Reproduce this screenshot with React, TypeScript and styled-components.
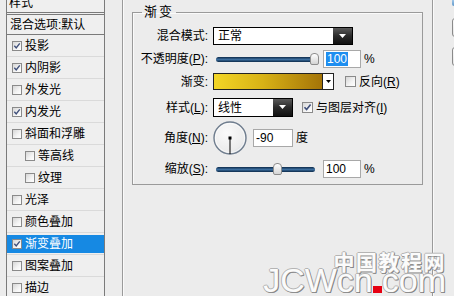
import React from "react";
import styled, { createGlobalStyle } from "styled-components";

const GlobalStyle = createGlobalStyle`
  html, body { margin: 0; padding: 0; }
  body {
    width: 454px; height: 296px; overflow: hidden; background: #ececec;
    font-family: "Liberation Sans", "Noto Sans CJK SC", sans-serif;
    font-size: 12px; color: #000;
  }
  #root { width: 454px; height: 296px; }
`;

const Page = styled.div`
  position: relative;
  display: flex;
  width: 454px;
  height: 296px;
  overflow: hidden;
  background: #ececec;
`;

/* ---------- left list ---------- */
const LeftPanel = styled.div`
  flex: none;
  width: 105px;
  padding-left: 6px;
  box-sizing: border-box;
  height: 100%;
`;

const StyleList = styled.div`
  height: 100%;
  border-left: 1px solid #7a7a7a;
  border-right: 1px solid #7a7a7a;
  background: #efefef;
  display: flex;
  flex-direction: column;
`;

const HeaderRow = styled.div`
  flex: none;
  height: 12px;
  box-sizing: border-box;
  padding: 0 0 3px 2px;
  display: flex;
  align-items: flex-end;
  overflow: hidden;
  line-height: 12px;
`;

const DoubleRule = styled.div`
  flex: none;
  height: 1px;
  border-top: 1px solid #7a7a7a;
  border-bottom: 1px solid #7a7a7a;
`;

const BlendRow = styled.div`
  flex: none;
  height: 19px;
  display: flex;
  align-items: center;
  padding-left: 3px;
  border-bottom: 1px solid #7a7a7a;
  line-height: 14px;
`;

const ListItem = styled.div`
  flex: none;
  height: 21px;
  display: flex;
  align-items: center;
  border-bottom: 1px solid #dadada;
`;

const ItemInner = styled.div<{ $indent: boolean; $selected: boolean }>`
  width: 100%;
  height: 18px;
  display: flex;
  align-items: center;
  box-sizing: border-box;
  padding-left: ${(p) => (p.$indent ? 18 : 5)}px;
  background: ${(p) => (p.$selected ? "#1689e3" : "transparent")};
  color: ${(p) => (p.$selected ? "#fff" : "#000")};
  line-height: 14px;
`;

const Box = styled.span<{ $size: number }>`
  flex: none;
  display: inline-flex;
  align-items: center;
  justify-content: center;
  width: ${(p) => p.$size}px;
  height: ${(p) => p.$size}px;
  box-sizing: border-box;
  border: 1px solid #8a8a8a;
  background: linear-gradient(135deg, #d6d6d6 0%, #f4f4f4 60%, #ffffff 100%);
  margin-right: 3px;
`;

const Check = ({ on, size }: { on: boolean; size: number }) => (
  <Box $size={size}>
    {on && (
      <svg width={size - 2} height={size - 2} viewBox="0 0 9 9">
        <path d="M1.5 4.3 L3.6 6.6 L7.6 1.6" fill="none" stroke="#3f4f7a" strokeWidth="1.6" />
      </svg>
    )}
  </Box>
);

/* ---------- right panel ---------- */
const OuterBox = styled.div`
  flex: none;
  margin-left: 17px;
  width: 311px;
  height: 100%;
  box-sizing: border-box;
  border-left: 1px solid #9a9a9a;
  border-right: 1px solid #9a9a9a;
  box-shadow: inset 1px 0 0 #fafafa, 1px 0 0 #fafafa;
  padding: 5px 9px 0;
`;

const Group = styled.fieldset`
  margin: 0;
  min-width: 0;
  padding: 0 0 6px;
  border: 1px solid #9a9a9a;
  box-shadow: inset 1px 1px 0 #fafafa;
  display: flex;
  flex-direction: column;
`;

const Legend = styled.legend`
  margin-left: 9px;
  padding: 0 2px;
  font-size: 13px;
  letter-spacing: 2px;
  line-height: 14px;
`;

const Row = styled.div<{ $h: number; $mt: number }>`
  display: flex;
  align-items: center;
  height: ${(p) => p.$h}px;
  margin-top: ${(p) => p.$mt}px;
  line-height: 14px;
`;

const Label = styled.span`
  flex: none;
  width: 75px;
  margin-right: 5px;
  text-align: right;
  white-space: nowrap;
`;

const Select = styled.div<{ $w: number }>`
  flex: none;
  width: ${(p) => p.$w}px;
  height: 100%;
  box-sizing: border-box;
  border: 1px solid #000;
  background: #fff;
  display: flex;
`;

const SelectText = styled.span`
  flex: 1;
  padding-left: 4px;
  display: flex;
  align-items: center;
`;

const SelectButton = styled.span`
  flex: none;
  width: 19px;
  background: linear-gradient(#5a5a5a 0%, #2a2a2a 50%, #111 100%);
  display: flex;
  align-items: center;
  justify-content: center;
`;

const SliderWrap = styled.div`
  flex: none;
  position: relative;
  width: 107px;
  height: 100%;
  display: flex;
  align-items: center;
`;

const Track = styled.div`
  margin-left: 3px;
  width: 99px;
  height: 5px;
  border-radius: 3px;
  background: linear-gradient(#0c2a4a 0%, #3c6e9e 50%, #0c2a4a 100%);
`;

const Thumb = styled.div`
  position: absolute;
  top: 3px;
  width: 9px;
  height: 12px;
  box-sizing: border-box;
  border: 1px solid #8d8d8d;
  border-radius: 4px 4px 2px 2px;
  background: linear-gradient(#ffffff, #d4d4d4);
`;

const Input = styled.div<{ $w: number; $ml: number }>`
  flex: none;
  width: ${(p) => p.$w}px;
  height: 18px;
  margin-left: ${(p) => p.$ml}px;
  box-sizing: border-box;
  border: 1px solid #a8a8a8;
  background: #fff;
  padding-left: 2px;
  display: flex;
  align-items: center;
`;

const Selected = styled.span`
  background: #1e8ef0;
  color: #fff;
  padding: 0 1px;
`;

const Unit = styled.span`
  margin-left: 3px;
`;

const GradientBox = styled.div`
  flex: none;
  width: 121px;
  height: 100%;
  box-sizing: border-box;
  border: 1px solid #222;
  display: flex;
`;

const GradientFill = styled.div`
  flex: 1;
  background: linear-gradient(to right, #f3d626 0%, #d8b216 45%, #a47408 100%);
`;

const SmallArrow = styled.span`
  flex: none;
  width: 10px;
  border-left: 1px solid #222;
  background: #fff;
  display: flex;
  align-items: center;
  justify-content: center;
`;

const CheckLabel = styled.span<{ $ml: number }>`
  display: inline-flex;
  align-items: center;
  margin-left: ${(p) => p.$ml}px;
  white-space: nowrap;
`;

const RightColumn = styled.div`
  flex: none;
  margin-left: 19px;
  display: flex;
  flex-direction: column;
`;

const TopSliver = styled.div`
  width: 60px;
  height: 6px;
  background: linear-gradient(#9fc6e8, #5f97c9);
  border-radius: 0 0 2px 2px;
`;

const SideButton = styled.div<{ $mt: number }>`
  width: 70px;
  height: 17px;
  margin-top: ${(p) => p.$mt}px;
  border: 1px solid #8a8a8a;
  border-radius: 3px;
  background: linear-gradient(#fbfbfb, #e4e4e4);
`;

/* ---------- watermark ---------- */
const Watermark = styled.div`
  position: absolute;
  right: 8px;
  top: 250px;
  display: flex;
  flex-direction: column;
  align-items: flex-end;
  color: #fbfbfb;
  text-shadow: -1px 0 #b4b4b4, 0 -1px #b4b4b4, 1px 0 #8e8e8e, 0 1px #8e8e8e, 1px 1px #7a7a7a;
  pointer-events: none;
`;

const WmCn = styled.div`
  font-family: "Noto Sans CJK SC", sans-serif;
  font-weight: 700;
  font-size: 21px;
  line-height: 22px;
  letter-spacing: 1.5px;
`;

const WmEn = styled.div`
  font-family: "Liberation Sans", Arial, sans-serif;
  font-size: 34px;
  line-height: 34px;
  margin-top: -9px;
  display: flex;
  align-items: baseline;
`;

const WmDot = styled.span`
  display: inline-block;
  width: 9px;
  height: 7px;
  background: #e60012;
  color: transparent;
  text-shadow: none;
  overflow: hidden;
  line-height: 7px;
  font-size: 7px;
`;

/* ---------- data ---------- */
const items: { name: string; on: boolean; indent?: boolean; selected?: boolean }[] = [
  { name: "投影", on: true },
  { name: "内阴影", on: true },
  { name: "外发光", on: false },
  { name: "内发光", on: true },
  { name: "斜面和浮雕", on: false },
  { name: "等高线", on: false, indent: true },
  { name: "纹理", on: false, indent: true },
  { name: "光泽", on: false },
  { name: "颜色叠加", on: false },
  { name: "渐变叠加", on: true, selected: true },
  { name: "图案叠加", on: false },
  { name: "描边", on: false },
];

const DownTri = ({ color, w }: { color: string; w: number }) => (
  <svg width={w} height={Math.ceil(w / 2) + 1} viewBox={`0 0 ${w} ${Math.ceil(w / 2) + 1}`}>
    <path d={`M0 0 H${w} L${w / 2} ${Math.ceil(w / 2)} Z`} fill={color} />
  </svg>
);

const Slider = ({ frac }: { frac: number }) => (
  <SliderWrap>
    <Track />
    <Thumb style={{ left: 3 + frac * 98 - 4.5 }} />
  </SliderWrap>
);

const Dial = () => (
  <svg width="34" height="34" viewBox="0 0 34 34" style={{ flex: "none" }}>
    <defs>
      <radialGradient id="dialg" cx="40%" cy="35%" r="70%">
        <stop offset="0%" stopColor="#fbfbfb" />
        <stop offset="80%" stopColor="#ececec" />
        <stop offset="100%" stopColor="#d6dbe2" />
      </radialGradient>
    </defs>
    <circle cx="17" cy="17" r="16" fill="url(#dialg)" stroke="#6f7d8e" strokeWidth="1.4" />
    <circle cx="17" cy="17" r="14.6" fill="none" stroke="#ffffff" strokeWidth="0.8" opacity="0.8" />
    <line x1="17" y1="17" x2="17" y2="33" stroke="#000" strokeWidth="1" />
    <rect x="15.5" y="15.5" width="3" height="3" fill="#000" />
  </svg>
);

export default function App() {
  return (
    <Page>
      <GlobalStyle />
      <LeftPanel>
        <StyleList>
          <HeaderRow>
            <span>样式</span>
          </HeaderRow>
          <DoubleRule />
          <BlendRow>混合选项:默认</BlendRow>
          {items.map((it) => (
            <ListItem key={it.name}>
              <ItemInner $indent={!!it.indent} $selected={!!it.selected}>
                <Check on={it.on} size={10} />
                <span>{it.name}</span>
              </ItemInner>
            </ListItem>
          ))}
        </StyleList>
      </LeftPanel>

      <OuterBox>
        <Group>
          <Legend>渐变</Legend>
          <Row $h={18} $mt={8}>
            <Label>混合模式:</Label>
            <Select $w={140}>
              <SelectText>正常</SelectText>
              <SelectButton>
                <DownTri color="#fff" w={7} />
              </SelectButton>
            </Select>
          </Row>
          <Row $h={18} $mt={5}>
            <Label>
              不透明度(<u>P</u>):
            </Label>
            <Slider frac={1} />
            <Input $w={38} $ml={3}>
              <Selected>100</Selected>
            </Input>
            <Unit>%</Unit>
          </Row>
          <Row $h={17} $mt={5}>
            <Label>渐变:</Label>
            <GradientBox>
              <GradientFill />
              <SmallArrow>
                <DownTri color="#000" w={5} />
              </SmallArrow>
            </GradientBox>
            <CheckLabel $ml={11}>
              <Check on={false} size={11} />
              <span>
                反向(<u>R</u>)
              </span>
            </CheckLabel>
          </Row>
          <Row $h={19} $mt={8}>
            <Label>
              样式(<u>L</u>):
            </Label>
            <Select $w={80}>
              <SelectText>线性</SelectText>
              <SelectButton>
                <DownTri color="#fff" w={7} />
              </SelectButton>
            </Select>
            <CheckLabel $ml={9}>
              <Check on={true} size={11} />
              <span>
                与图层对齐(<u>I</u>)
              </span>
            </CheckLabel>
          </Row>
          <Row $h={34} $mt={4}>
            <Label>
              角度(<u>N</u>):
            </Label>
            <Dial />
            <Input $w={40} $ml={6}>
              -90
            </Input>
            <Unit>度</Unit>
          </Row>
          <Row $h={18} $mt={5}>
            <Label>
              缩放(<u>S</u>):
            </Label>
            <Slider frac={0.625} />
            <Input $w={38} $ml={3}>
              100
            </Input>
            <Unit>%</Unit>
          </Row>
        </Group>
      </OuterBox>

      <RightColumn>
        <TopSliver />
        <SideButton $mt={12} />
        <SideButton $mt={10} />
      </RightColumn>

      <Watermark>
        <WmCn>中国教程网</WmCn>
        <WmEn>
          JCWcn<WmDot>.</WmDot>com
        </WmEn>
      </Watermark>
    </Page>
  );
}
